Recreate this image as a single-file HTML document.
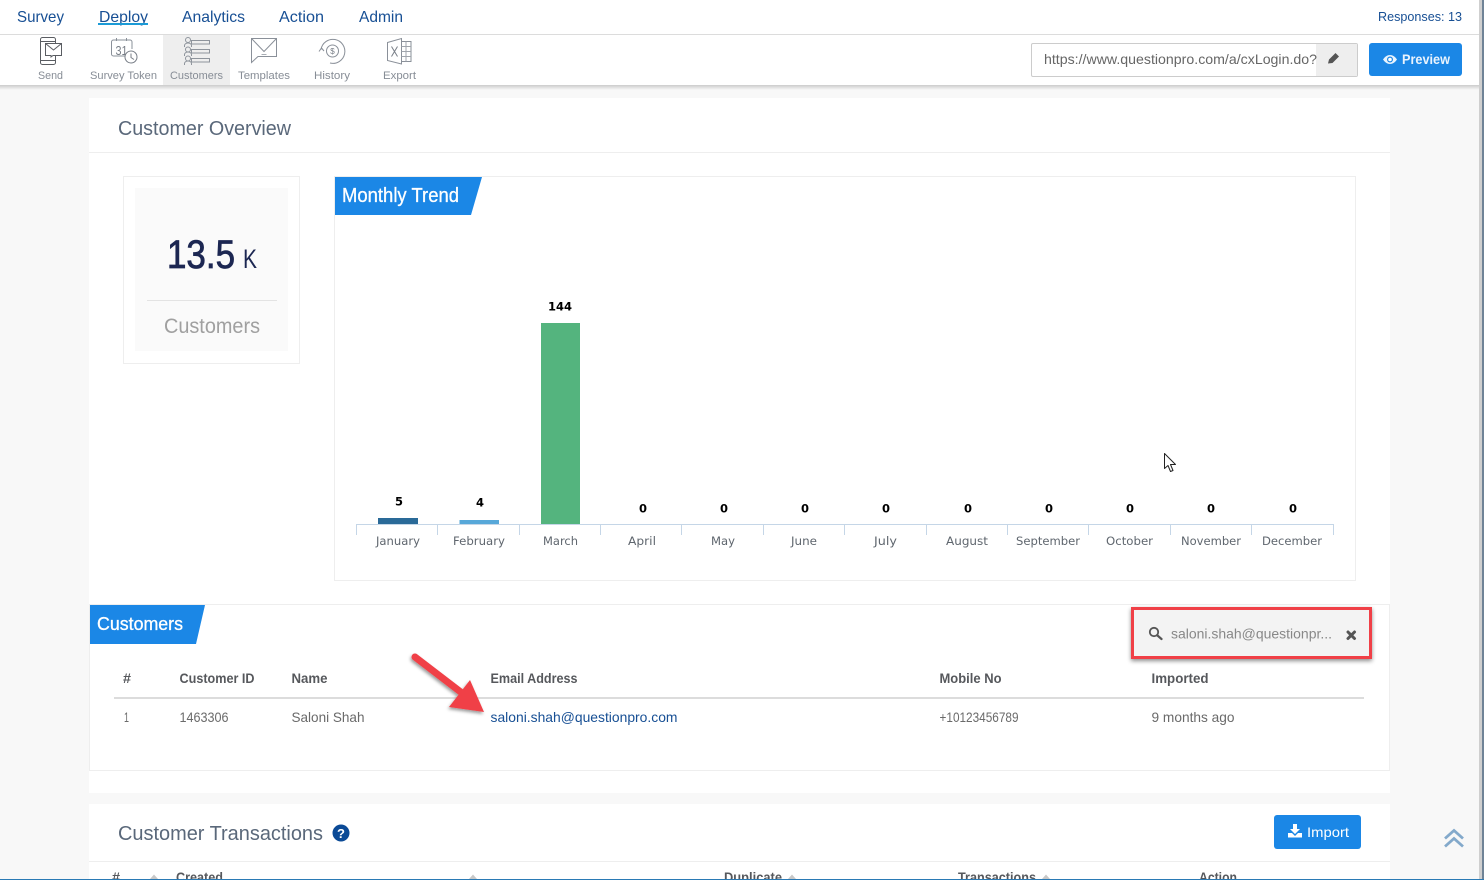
<!DOCTYPE html>
<html lang="en">
<head>
<meta charset="utf-8">
<title>Customer Overview</title>
<style>
html,body{margin:0;padding:0;background:#f8f8f8;width:1484px;height:880px;overflow:hidden}
svg{display:block}
text{font-family:"Liberation Sans",sans-serif}
.nav{font-size:16px;fill:#174f94}
.tb{font-size:11px;fill:#878d96}
.th{font-size:14px;font-weight:bold;fill:#56585c}
.td{font-size:14px;fill:#6a6a6a}
.mo{font-family:"DejaVu Sans",sans-serif;font-size:11.5px;fill:#5f666e}
.val{font-family:"DejaVu Sans",sans-serif;font-size:11.5px;font-weight:bold;fill:#000}
.ic{fill:none;stroke:#8a9099;stroke-width:1}
.title{font-size:20px;fill:#5a687a}
.med{stroke:#fff;stroke-width:.3px}
</style>
</head>
<body>
<svg width="1484" height="880" viewBox="0 0 1484 880" xmlns="http://www.w3.org/2000/svg">
<defs>
<filter id="sh" x="-10%" y="-30%" width="120%" height="170%"><feDropShadow dx="0" dy="2" stdDeviation="2" flood-color="#000" flood-opacity=".45"/></filter>
<filter id="ash" x="-30%" y="-30%" width="170%" height="170%"><feDropShadow dx="-1" dy="2" stdDeviation="1.5" flood-color="#000" flood-opacity=".4"/></filter>
<linearGradient id="top" x1="0" y1="0" x2="0" y2="1"><stop offset="0" stop-color="#000" stop-opacity=".18"/><stop offset="1" stop-color="#000" stop-opacity="0"/></linearGradient>
</defs>

<rect width="1484" height="880" fill="#f8f8f8"/>

<!-- Main card -->
<rect x="89" y="98" width="1301" height="695" fill="#fff"/>
<text class="title" x="118" y="135" textLength="173" lengthAdjust="spacingAndGlyphs">Customer Overview</text>
<rect x="89" y="152" width="1301" height="1" fill="#eee"/>

<!-- Stat box -->
<rect x="123.500" y="176.500" width="176" height="187" fill="#fff" stroke="#eee"/>
<rect x="135" y="188" width="153" height="163" fill="#fafafa"/>
<text x="167" y="268" font-size="40" fill="#1c2752" stroke="#1c2752" stroke-width=".8" textLength="68" lengthAdjust="spacingAndGlyphs">13.5</text>
<text x="243" y="268" font-size="27" fill="#1c2752" textLength="14" lengthAdjust="spacingAndGlyphs">K</text>
<rect x="147" y="300" width="130" height="1" fill="#e3e3e3"/>
<text x="164" y="333" font-size="21" fill="#a0a0a0" textLength="96" lengthAdjust="spacingAndGlyphs">Customers</text>

<!-- Chart box -->
<rect x="334.500" y="176.500" width="1021" height="404" fill="#fff" stroke="#eee"/>
<polygon points="335,177 482,177 471,215 335,215" fill="#1b87e6"/>
<text class="med" x="342" y="202" font-size="20" fill="#fff" textLength="117" lengthAdjust="spacingAndGlyphs">Monthly Trend</text>

<rect x="378" y="518" width="40" height="6" fill="#2a6a98"/>
<rect x="459.500" y="520" width="39.500" height="4" fill="#57a8d9"/>
<rect x="541" y="323" width="39" height="201" fill="#54b47e"/>

<path d="M356.500 535V524.500H1333.500V535M437.500 524.500V535M519.500 524.500V535M600.500 524.500V535M681.500 524.500V535M763.500 524.500V535M844.500 524.500V535M926.500 524.500V535M1007.500 524.500V535M1088.500 524.500V535M1170.500 524.500V535M1251.500 524.500V535" fill="none" stroke="#c5d6e7" stroke-width="1"/>

<text class="val" x="395" y="505.500" textLength="8">5</text>
<text class="val" x="476" y="506.500" textLength="8">4</text>
<text class="val" x="548" y="310.500" textLength="24" lengthAdjust="spacing">144</text>
<text class="val" x="639" y="512.500">0</text>
<text class="val" x="720" y="512.500">0</text>
<text class="val" x="801" y="512.500">0</text>
<text class="val" x="882" y="512.500">0</text>
<text class="val" x="964" y="512.500">0</text>
<text class="val" x="1045" y="512.500">0</text>
<text class="val" x="1126" y="512.500">0</text>
<text class="val" x="1207" y="512.500">0</text>
<text class="val" x="1289" y="512.500">0</text>

<text class="mo" x="376" y="545" textLength="44" lengthAdjust="spacingAndGlyphs">January</text>
<text class="mo" x="453" y="545" textLength="52" lengthAdjust="spacingAndGlyphs">February</text>
<text class="mo" x="543" y="545" textLength="35" lengthAdjust="spacingAndGlyphs">March</text>
<text class="mo" x="628" y="545" textLength="28" lengthAdjust="spacingAndGlyphs">April</text>
<text class="mo" x="711" y="545" textLength="24" lengthAdjust="spacingAndGlyphs">May</text>
<text class="mo" x="791" y="545" textLength="26" lengthAdjust="spacingAndGlyphs">June</text>
<text class="mo" x="874" y="545" textLength="23" lengthAdjust="spacingAndGlyphs">July</text>
<text class="mo" x="946" y="545" textLength="42" lengthAdjust="spacingAndGlyphs">August</text>
<text class="mo" x="1016" y="545" textLength="64" lengthAdjust="spacingAndGlyphs">September</text>
<text class="mo" x="1106" y="545" textLength="47" lengthAdjust="spacingAndGlyphs">October</text>
<text class="mo" x="1181" y="545" textLength="60" lengthAdjust="spacingAndGlyphs">November</text>
<text class="mo" x="1262" y="545" textLength="60" lengthAdjust="spacingAndGlyphs">December</text>

<!-- Cursor -->
<path d="M1164.500 453.500V468.500L1168 465.500L1170.500 471.500L1173 470.500L1170.500 464.500H1175.500Z" fill="#fff" stroke="#222" stroke-width="1" stroke-linejoin="round"/>

<!-- Customers section -->
<rect x="89.500" y="604.500" width="1300" height="166" fill="#fff" stroke="#eee"/>
<polygon points="90,605 205,605 196,644 90,644" fill="#1b87e6"/>
<text class="med" x="97" y="630" font-size="18" fill="#fff" textLength="86" lengthAdjust="spacingAndGlyphs">Customers</text>

<g filter="url(#sh)"><rect x="1132.500" y="608.500" width="238" height="49" fill="#f3f3f3" stroke="#f04046" stroke-width="3"/></g>
<circle cx="1154" cy="632" r="4.200" fill="none" stroke="#555" stroke-width="1.800"/>
<path d="M1157.500 635.500L1161.500 639" stroke="#555" stroke-width="2.200" stroke-linecap="round"/>
<text x="1171" y="638.500" font-size="14" fill="#888" textLength="161" lengthAdjust="spacingAndGlyphs">saloni.shah@questionpr...</text>
<path d="M1348 632L1354.500 638.500M1354.500 632L1348 638.500" stroke="#555" stroke-width="3" stroke-linecap="round"/>

<text class="th" x="123" y="683" textLength="8" lengthAdjust="spacingAndGlyphs">#</text>
<text class="th" x="179.500" y="683" textLength="75" lengthAdjust="spacingAndGlyphs">Customer ID</text>
<text class="th" x="291.500" y="683" textLength="36" lengthAdjust="spacingAndGlyphs">Name</text>
<text class="th" x="490.500" y="683" textLength="87" lengthAdjust="spacingAndGlyphs">Email Address</text>
<text class="th" x="939.500" y="683" textLength="62" lengthAdjust="spacingAndGlyphs">Mobile No</text>
<text class="th" x="1151.500" y="683" textLength="57" lengthAdjust="spacingAndGlyphs">Imported</text>
<rect x="114" y="697" width="1250" height="2" fill="#dcdcdc"/>

<text class="td" x="124" y="722" textLength="5" lengthAdjust="spacingAndGlyphs">1</text>
<text class="td" x="179.500" y="722" textLength="49" lengthAdjust="spacingAndGlyphs">1463306</text>
<text class="td" x="291.500" y="722" textLength="73" lengthAdjust="spacingAndGlyphs">Saloni Shah</text>
<text class="td" x="490.500" y="722" textLength="187" lengthAdjust="spacingAndGlyphs" style="fill:#174f94">saloni.shah@questionpro.com</text>
<text class="td" x="939.500" y="722" textLength="79" lengthAdjust="spacingAndGlyphs">+10123456789</text>
<text class="td" x="1151.500" y="722" textLength="83" lengthAdjust="spacingAndGlyphs">9 months ago</text>

<!-- Red arrow -->
<g filter="url(#ash)">
<path d="M415 657L462 693" stroke="#f04046" stroke-width="7" stroke-linecap="round"/>
<polygon points="484,712 449,707 470,680" fill="#f04046"/>
</g>

<!-- Transactions card -->
<rect x="89" y="793" width="1301" height="11" fill="#f8f8f8"/>
<rect x="89" y="804" width="1301" height="76" fill="#fff"/>
<text class="title" x="118" y="840" textLength="205" lengthAdjust="spacingAndGlyphs">Customer Transactions</text>
<circle cx="341" cy="833" r="8.500" fill="#0b4a96"/>
<text x="341" y="838" font-size="13" font-weight="bold" fill="#fff" text-anchor="middle">?</text>
<rect x="1274" y="815" width="87" height="34" rx="3" fill="#1b87e6"/>
<path d="M1293 824h4v5h3l-5 5l-5-5h3z" fill="#fff"/>
<path d="M1288 833h4l3 3l3-3h4v4.500h-14z" fill="#fff"/>
<text x="1307" y="837" font-size="14" fill="#fff" textLength="42" lengthAdjust="spacingAndGlyphs">Import</text>
<rect x="89" y="861" width="1301" height="1" fill="#eee"/>
<text class="th" x="112" y="882" textLength="8" lengthAdjust="spacingAndGlyphs">#</text>
<text class="th" x="176" y="882" textLength="47" lengthAdjust="spacingAndGlyphs">Created</text>
<text class="th" x="724" y="882" textLength="58" lengthAdjust="spacingAndGlyphs">Duplicate</text>
<text class="th" x="958" y="882" textLength="78" lengthAdjust="spacingAndGlyphs">Transactions</text>
<text class="th" x="1199" y="882" textLength="38" lengthAdjust="spacingAndGlyphs">Action</text>
<path d="M150 879l4-4.500l4 4.500zM469 879l4-4.500l4 4.500zM788 879l4-4.500l4 4.500zM1042 879l4-4.500l4 4.500z" fill="#c8c8c8"/>

<!-- Scroll-to-top chevrons -->
<path d="M1445 838.500L1454 830.500L1463 838.500M1445 846.500L1454 838.500L1463 846.500" fill="none" stroke="#83a9cb" stroke-width="2.800"/>

<!-- Header -->
<rect x="0" y="85" width="1484" height="5" fill="url(#top)"/>
<rect x="0" y="0" width="1484" height="85" fill="#fff"/>
<rect x="0" y="34" width="1484" height="1" fill="#dcdcdc"/>

<text class="nav" x="17" y="22" textLength="47" lengthAdjust="spacingAndGlyphs">Survey</text>
<text class="nav" x="99" y="22" textLength="49" lengthAdjust="spacingAndGlyphs">Deploy</text>
<rect x="98" y="23" width="50" height="2" fill="#1b9ad6"/>
<text class="nav" x="182" y="22" textLength="63" lengthAdjust="spacingAndGlyphs">Analytics</text>
<text class="nav" x="279" y="22" textLength="45" lengthAdjust="spacingAndGlyphs">Action</text>
<text class="nav" x="359" y="22" textLength="44" lengthAdjust="spacingAndGlyphs">Admin</text>
<text x="1378" y="21" font-size="13" fill="#174f94" textLength="84" lengthAdjust="spacingAndGlyphs">Responses: 13</text>

<rect x="163" y="35" width="67" height="50" fill="#eeeeee"/>

<!-- Send icon -->
<rect x="40.500" y="37.500" width="15" height="27" rx="2" fill="#fff" stroke="#5a5d62"/>
<path d="M41 41.500H55M41 60.500H55" stroke="#5a5d62"/>
<path d="M45.500 43.500H61.500V55.500H53L51 57V55.500H45.500Z" fill="#fff" stroke="#5a5d62"/>
<path d="M45.500 43.500L53.500 50L61.500 43.500" fill="none" stroke="#5a5d62"/>

<!-- Survey Token icon -->
<path class="ic" d="M125 56H113.500a2 2 0 0 1-2-2V42a2 2 0 0 1 2-2H130a2 2 0 0 1 2 2v7"/>
<path class="ic" d="M116.500 38v3M126.500 38v3"/>
<text x="115.500" y="55" font-size="13" fill="#777d86" textLength="12" lengthAdjust="spacingAndGlyphs">31</text>
<circle cx="131" cy="57" r="6" fill="#fff" stroke="#777d86"/>
<path d="M131 53.500V57.500L134 59.500" fill="none" stroke="#777d86"/>

<!-- Customers icon -->
<g fill="none" stroke="#8e949c">
<circle cx="188" cy="40" r="2.500"/><path d="M184.500 47v-1.500a3.500 2.500 0 0 1 7 0V47"/>
<circle cx="188" cy="49.500" r="2.500"/><path d="M184.500 56v-1.500a3.500 2.500 0 0 1 7 0V56"/>
<circle cx="188" cy="58.500" r="2.500"/><path d="M184.500 65v-1.500a3.500 2.500 0 0 1 7 0V65"/>
<rect x="191.500" y="40.500" width="18" height="3.500"/>
<rect x="191.500" y="49.500" width="18" height="3.500"/>
<rect x="191.500" y="58.500" width="18" height="3.500"/>
</g>

<!-- Templates icon -->
<path d="M251.500 38.500H276.500V56.500H258L251.500 62.500Z" fill="none" stroke="#8a9099"/>
<path d="M251.500 38.500L264 51.500L276.500 38.500" fill="none" stroke="#8a9099"/>
<path d="M261.500 54.500H266.500" stroke="#a8adb4"/>

<!-- History icon -->
<path class="ic" d="M321 49.500A12 12 0 1 1 330 63"/>
<path d="M319 51.500L321.500 48L324 51" fill="none" stroke="#8a9099"/>
<circle class="ic" cx="332.500" cy="51" r="6"/>
<text x="332.500" y="54" font-size="8" fill="#777d86" text-anchor="middle">$</text>

<!-- Export icon -->
<path class="ic" d="M387.500 42.500L401.500 38.500V64L387.500 60.500Z"/>
<rect class="ic" x="401.500" y="41.500" width="9.500" height="20"/>
<path d="M401.500 46.500H411M401.500 51.500H411M401.500 56.500H411M406 41.500V61.500" fill="none" stroke="#a0a5ac"/>
<path d="M391.500 46.500L397.500 56.500M397.500 46.500L391.500 56.500" stroke="#777d86"/>

<text class="tb" x="38" y="79" textLength="25" lengthAdjust="spacingAndGlyphs">Send</text>
<text class="tb" x="90" y="79" textLength="67" lengthAdjust="spacingAndGlyphs">Survey Token</text>
<text class="tb" x="170" y="79" textLength="53" lengthAdjust="spacingAndGlyphs">Customers</text>
<text class="tb" x="238" y="79" textLength="52" lengthAdjust="spacingAndGlyphs">Templates</text>
<text class="tb" x="314" y="79" textLength="36" lengthAdjust="spacingAndGlyphs">History</text>
<text class="tb" x="383" y="79" textLength="33" lengthAdjust="spacingAndGlyphs">Export</text>

<!-- URL field -->
<rect x="1031.500" y="43.500" width="326" height="33" rx="1.500" fill="#fff" stroke="#ccc"/>
<rect x="1316" y="44" width="41" height="32" fill="#eee"/>
<text x="1044" y="64" font-size="14" fill="#666" textLength="273" lengthAdjust="spacingAndGlyphs">https://www.questionpro.com/a/cxLogin.do?</text>
<path d="M1328 63.500L1329 59.500L1335.500 53L1339 56.500L1332.500 63L1328 63.500Z" fill="#555"/>

<!-- Preview button -->
<rect x="1369" y="43" width="93" height="33" rx="3" fill="#1b87e6"/>
<path d="M1383 59.500C1385 56.500 1387.500 55 1390 55C1392.500 55 1395 56.500 1397 59.500C1395 62.500 1392.500 64 1390 64C1387.500 64 1385 62.500 1383 59.500Z" fill="#fff" opacity=".9"/>
<circle cx="1390" cy="59.500" r="3" fill="#1b87e6"/>
<circle cx="1390" cy="59.500" r="1.800" fill="#fff"/>
<text x="1402" y="64" font-size="14" font-weight="bold" fill="#e9f3fd" textLength="48" lengthAdjust="spacingAndGlyphs">Preview</text>

<!-- Window edges -->
<rect x="1479" y="0" width="3" height="880" fill="#cfcfcf"/>
<rect x="1482" y="0" width="2" height="880" fill="#6f8396"/>
<rect x="0" y="879" width="1484" height="1" fill="#2a7ab5"/>
</svg>
</body>
</html>
